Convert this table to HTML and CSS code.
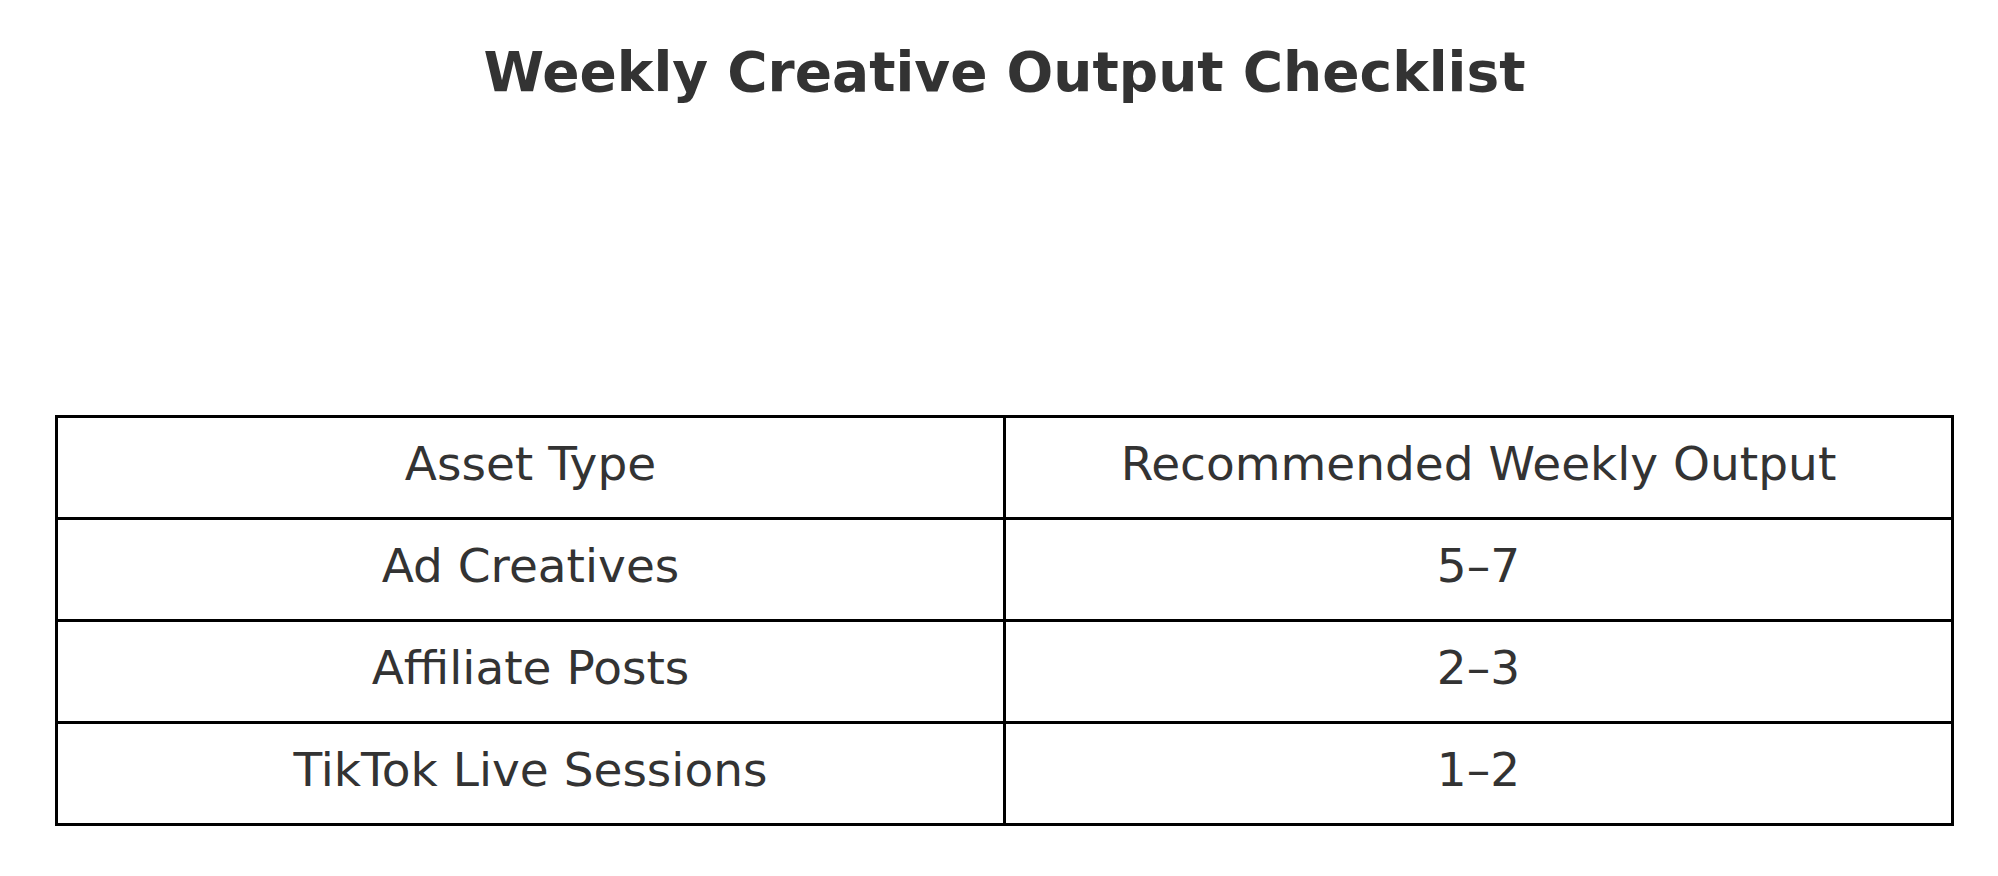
FILE: index.html
```html
<!DOCTYPE html>
<html>
<head>
<meta charset="utf-8">
<link rel="stylesheet" href="styles.css">
</head>
<body>
<div class="page">
  <h1 class="title">Weekly Creative Output Checklist</h1>
  <table class="grid">
    <tr><td>Asset Type</td><td>Recommended Weekly Output</td></tr>
    <tr><td>Ad Creatives</td><td>5–7</td></tr>
    <tr><td>Affiliate Posts</td><td>2–3</td></tr>
    <tr><td>TikTok Live Sessions</td><td>1–2</td></tr>
  </table>
</div>
</body>
</html>
```
FILE: styles.css
```css
html, body {
  margin: 0;
  padding: 0;
  background: #ffffff;
}
.page {
  width: 1899px;
  margin-left: 55px;
  font-family: "DejaVu Sans", sans-serif;
  color: #333333;
}
.title {
  margin: 0;
  padding-top: 41px;
  height: 415px;
  box-sizing: border-box;
  text-align: center;
  font-size: 55px;
  font-weight: bold;
  line-height: 62px;
}
.grid {
  width: 1899px;
  border-collapse: collapse;
  table-layout: fixed;
}
.grid td {
  border: 3px solid #000000;
  height: 92px;
  padding: 0 0 7px 0;
  text-align: center;
  vertical-align: middle;
  font-size: 47px;
  line-height: 52px;
}
```
